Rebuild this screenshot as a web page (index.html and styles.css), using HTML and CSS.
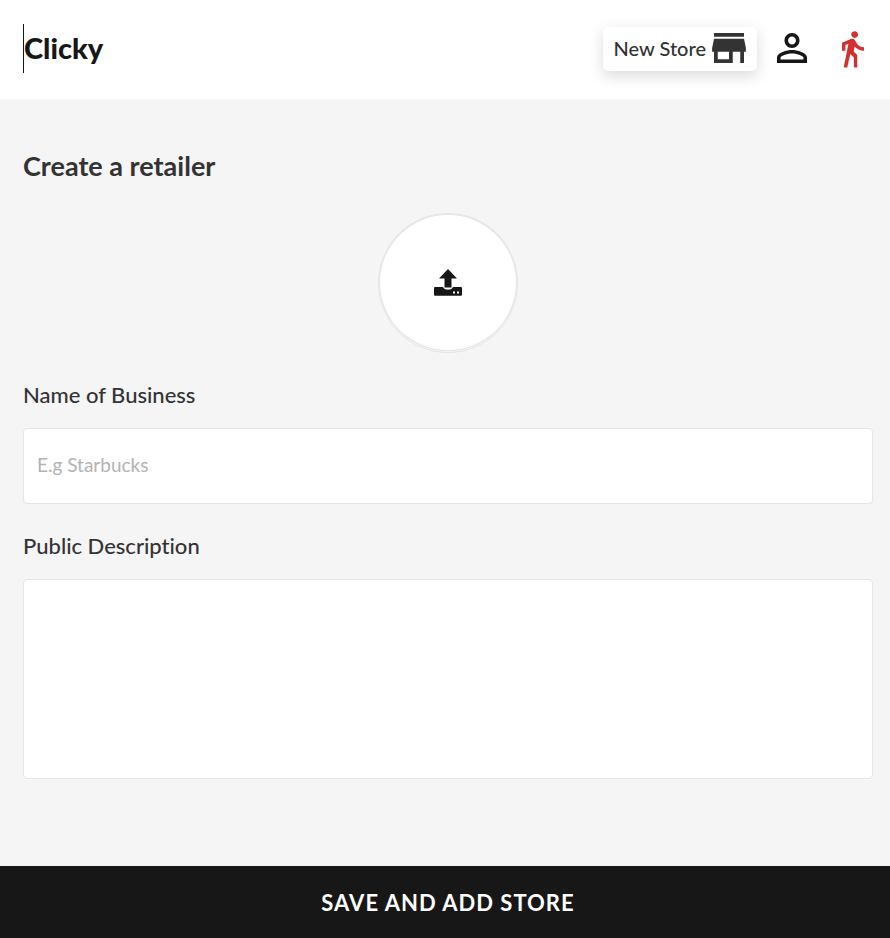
FILE: index.html
```html
<!DOCTYPE html>
<html lang="en">
<head>
    <meta charset="utf-8">
    <meta name="viewport" content="width=device-width, initial-scale=1">
    <title>Clicky</title>
    <link rel="stylesheet" href="styles.css">
</head>
<body>
    <header class="topbar">
        <a href="#" class="brand">Clicky</a>
        <nav class="actions">
            <a href="#" class="new-store">
                New Store
                <svg class="icon-store" viewBox="3 4 18 16" aria-hidden="true"><path d="M20 4H4v2h16V4zm1 10v-2l-1-5H4l-1 5v2h1v6h10v-6h4v6h2v-6h1zm-9 4H6v-4h6v4z"/></svg>
            </a>
            <a href="#" class="profile" aria-label="Profile">
                <svg class="icon-person" viewBox="4 4 16 16" aria-hidden="true"><path d="M12 5.9c1.16 0 2.1.94 2.1 2.1s-.94 2.1-2.1 2.1S9.9 9.16 9.9 8s.94-2.1 2.1-2.1m0 9c2.97 0 6.1 1.46 6.1 2.1v1.1H5.9V17c0-.64 3.13-2.1 6.1-2.1M12 4C9.79 4 8 5.79 8 8s1.79 4 4 4 4-1.79 4-4-1.79-4-4-4zm0 9c-2.67 0-8 1.34-8 4v3h16v-3c0-2.66-5.33-4-8-4z"/></svg>
            </a>
            <a href="#" class="logout" aria-label="Log out">
                <svg class="icon-walk" viewBox="6 1 13 22" aria-hidden="true"><path d="M13.5 5.5c1.1 0 2-.9 2-2s-.9-2-2-2-2 .9-2 2 .9 2 2 2zM9.8 8.9L7 23h2.1l1.8-8 2.1 2v6h2v-7.5l-2.1-2 .6-3C14.8 12 16.8 13 19 13v-2c-1.9 0-3.5-1-4.3-2.4l-1-1.6c-.4-.6-1-1-1.7-1-.3 0-.5.1-.8.1L6 8.3V13h2V9.6l1.8-.7z"/></svg>
            </a>
        </nav>
    </header>

    <form class="retailer" action="">
        <div class="fields">
            <h1>Create a retailer</h1>

            <div class="logo">
                <button type="button" class="upload" aria-label="Upload logo">
                    <svg class="icon-upload" viewBox="0 0 28 27" aria-hidden="true">
                        <path d="M14 0L23 9.500H17.500V18.500H10.500V9.500H5z"/>
                        <path fill-rule="evenodd" d="M1.3 18H9c.7 1.600 2 2.500 3.300 2.500h3.400c1.300 0 2.600-.9 3.300-2.500h7.700c.8 0 1.300.5 1.300 1.300v6.200c0 .8-.5 1.300-1.300 1.300H1.300C.5 26.800 0 26.300 0 25.500v-6.200c0-.8.5-1.300 1.300-1.300zM19 22.500v2h2v-2zm4 0v2h2v-2z"/>
                    </svg>
                </button>
            </div>

            <label for="name">Name of Business</label>
            <input type="text" id="name" placeholder="E.g Starbucks">

            <label for="description">Public Description</label>
            <textarea id="description"></textarea>
        </div>

        <button type="submit" class="save">SAVE AND ADD STORE</button>
    </form>
</body>
</html>
```

FILE: styles.css
```css
* {
    margin: 0;
    padding: 0;
    box-sizing: border-box;
}

body {
    display: flex;
    flex-direction: column;
    min-height: 100vh;
    background: #f5f5f5;
    color: #333;
    font-family: Lato, "Open Sans", sans-serif;
    font-variant-ligatures: none;
}

a {
    color: #171717;
    text-decoration: none;
}

svg {
    display: block;
    fill: currentColor;
}

/* header */
.topbar {
    display: flex;
    align-items: center;
    justify-content: space-between;
    padding: 24px 26px 26px 23px;
    background: #fff;
}

.brand {
    padding-bottom: 2px;
    border-left: 1px solid #171717;
    font-size: 29px;
    font-weight: 900;
    line-height: 47px;
}

.actions {
    display: flex;
    align-items: center;
    gap: 20px;
}

.new-store {
    display: flex;
    align-items: center;
    gap: 6px;
    height: 44px;
    padding: 0 11px 2px;
    border-radius: 5px;
    background: #fff;
    box-shadow: 0 5px 15px rgba(0, 0, 0, 0.15);
    color: #333;
    font-family: "Lato Medium", Lato, sans-serif;
    font-size: 20px;
    font-weight: 500;
}

.icon-store {
    width: 34px;
    height: 30px;
}

.profile {
    padding-bottom: 2px;
}

.icon-person {
    width: 30px;
    height: 30px;
}

.logout {
    margin-left: 15px;
    color: #d32f2f;
}

.icon-walk {
    width: 22px;
    height: 38px;
}

/* form */
.retailer {
    display: flex;
    flex: 1;
    flex-direction: column;
    justify-content: space-between;
}

.fields {
    padding: 50px 17px 40px 23px;
}

h1 {
    font-size: 27px;
    font-weight: 700;
    line-height: 34px;
}

.logo {
    width: 140px;
    height: 140px;
    margin: 30px auto 26px;
    padding-bottom: 1px;
    border: 1px solid #e5e5e5;
    border-radius: 50%;
}

.upload {
    display: flex;
    align-items: center;
    justify-content: center;
    width: 100%;
    height: 100%;
    border: 1px solid #e5e5e5;
    border-radius: 50%;
    background: #fff;
    color: #171717;
    cursor: pointer;
}

.icon-upload {
    width: 28px;
    height: 27px;
}

label {
    display: block;
    margin-bottom: 17px;
    font-family: "Lato Medium", Lato, sans-serif;
    font-size: 22px;
    font-weight: 500;
    line-height: 32px;
}

input,
textarea {
    display: block;
    width: 100%;
    padding: 0 13px;
    border: 1px solid #e5e5e5;
    border-radius: 4px;
    outline: 0;
    background: #fff;
    color: #333;
    font-family: inherit;
    font-size: 19px;
}

input {
    height: 76px;
    margin-bottom: 26px;
    padding-bottom: 4px;
}

input::placeholder {
    color: #b3b3b3;
}

textarea {
    height: 200px;
    padding: 13px;
    resize: none;
}

.save {
    height: 72px;
    padding: 0 17px 0 23px;
    border: 0;
    background: #171717;
    color: #fff;
    font-family: inherit;
    font-size: 22px;
    font-weight: 700;
    letter-spacing: 1px;
    cursor: pointer;
}
```
